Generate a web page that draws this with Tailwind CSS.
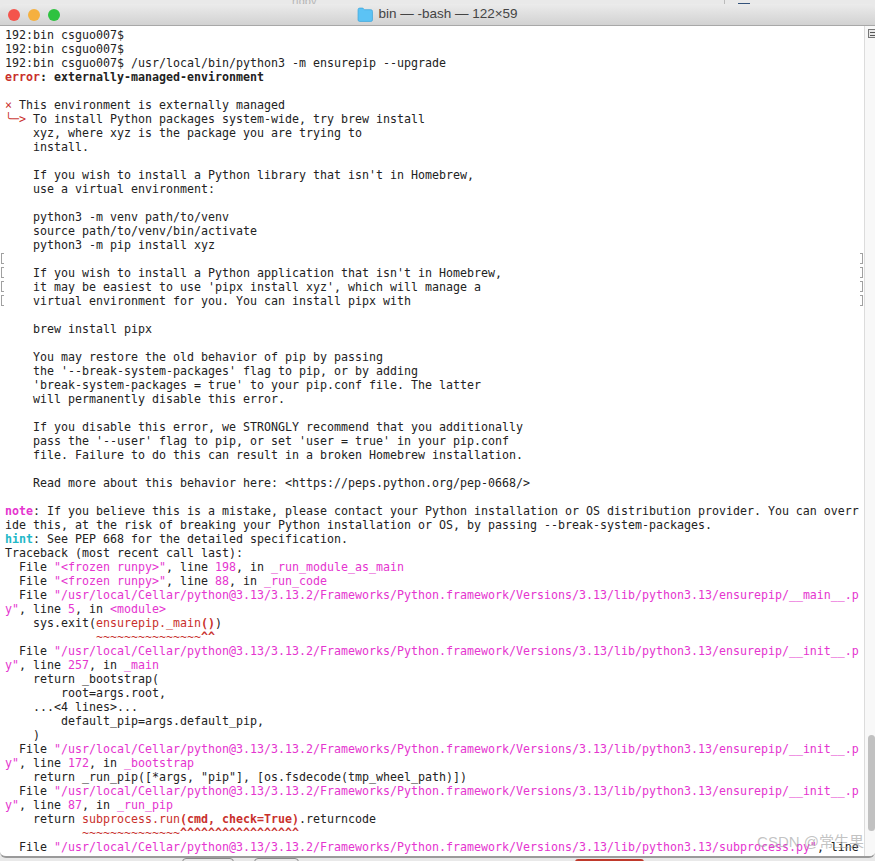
<!DOCTYPE html>
<html lang="en">
<head>
	<meta charset="UTF-8" />
	<title>bin — -bash — 122×59</title>
	<script src="https://cdn.jsdelivr.net/npm/@tailwindcss/browser@4"></script>
</head>
<body class="bg-[#e9e9e9] h-[861px] w-[875px] overflow-hidden">
	<div class="relative h-[861px] pt-[4px] flex flex-col">
		<!-- o que aparece atras da janela -->
		<span class="absolute left-[292px] top-[-7px] text-[11px] text-[#b5b5b5] font-['Liberation_Sans',sans-serif]">rfdby</span>
		<span class="absolute left-[724px] top-0 h-[4px] w-px bg-[#bbbbbb]"></span>
		<span class="absolute left-[738px] top-[3px] h-[1px] w-[12px] bg-[#33527a]"></span>
		<span class="absolute left-[182px] top-[858px] h-[6px] w-[52px] rounded-t-[4px] border border-[#888888]"></span>
		<span class="absolute left-[254px] top-[858px] h-[6px] w-[45px] rounded-t-[4px] border border-[#888888]"></span>
		<span class="absolute left-[575px] top-[859px] h-[4px] w-[69px] rounded-t-[3px] bg-[#c0392b]"></span>

		<!-- barra de titulo -->
		<div class="relative flex items-center justify-center shrink-0 h-[22px] rounded-t-[6px] border-b border-[#a8a8a8] bg-gradient-to-b from-[#ebebeb] to-[#d2d2d2]">
			<div class="absolute left-[8px] top-[5px] flex gap-[8px]">
				<span class="w-[12px] h-[12px] rounded-full bg-[#f4544c]"></span>
				<span class="w-[12px] h-[12px] rounded-full bg-[#f5b03f]"></span>
				<span class="w-[12px] h-[12px] rounded-full bg-[#2fc240]"></span>
			</div>
			<div class="flex items-center gap-[5px] text-[13.5px] text-[#444444] font-['Liberation_Sans',sans-serif]">
				<svg width="16" height="15" viewBox="0 0 15 14"><path d="M1 2.5 Q1 1 2.5 1 H5.5 L7 2.5 H13 Q14.5 2.5 14.5 4 V12 Q14.5 13.5 13 13.5 H2.5 Q1 13.5 1 12 Z" fill="#5cc3f5" stroke="#3ea6dc" stroke-width="0.7"/></svg>
				<span>bin — -bash — 122×59</span>
			</div>
		</div>

		<div class="relative flex h-[832px] shrink-0 rounded-b-[6px] overflow-hidden border-b-2 border-[#9a9a9a] bg-white">
			<!-- terminal -->
			<div class="relative flex-1 flex flex-col pl-[5px] pt-[2px] font-['DejaVu_Sans_Mono',monospace] text-[11.63px] leading-[14px] text-[#222222] whitespace-pre overflow-hidden">
				<div class="h-[14px]">192:bin csguo007$</div>
				<div class="h-[14px]">192:bin csguo007$</div>
				<div class="h-[14px]">192:bin csguo007$ /usr/local/bin/python3 -m ensurepip --upgrade</div>
				<div class="h-[14px] font-bold"><span class="text-[#c9302c]">error</span>: externally-managed-environment</div>
				<div class="h-[14px]"></div>
				<div class="h-[14px]"><span class="text-[#c9302c]">×</span> This environment is externally managed</div>
				<div class="h-[14px]"><span class="text-[#c9302c]">╰─&gt;</span> To install Python packages system-wide, try brew install</div>
				<div class="h-[14px]">    xyz, where xyz is the package you are trying to</div>
				<div class="h-[14px]">    install.</div>
				<div class="h-[14px]"></div>
				<div class="h-[14px]">    If you wish to install a Python library that isn't in Homebrew,</div>
				<div class="h-[14px]">    use a virtual environment:</div>
				<div class="h-[14px]"></div>
				<div class="h-[14px]">    python3 -m venv path/to/venv</div>
				<div class="h-[14px]">    source path/to/venv/bin/activate</div>
				<div class="h-[14px]">    python3 -m pip install xyz</div>
				<div class="h-[14px]"></div>
				<div class="h-[14px]">    If you wish to install a Python application that isn't in Homebrew,</div>
				<div class="h-[14px]">    it may be easiest to use 'pipx install xyz', which will manage a</div>
				<div class="h-[14px]">    virtual environment for you. You can install pipx with</div>
				<div class="h-[14px]"></div>
				<div class="h-[14px]">    brew install pipx</div>
				<div class="h-[14px]"></div>
				<div class="h-[14px]">    You may restore the old behavior of pip by passing</div>
				<div class="h-[14px]">    the '--break-system-packages' flag to pip, or by adding</div>
				<div class="h-[14px]">    'break-system-packages = true' to your pip.conf file. The latter</div>
				<div class="h-[14px]">    will permanently disable this error.</div>
				<div class="h-[14px]"></div>
				<div class="h-[14px]">    If you disable this error, we STRONGLY recommend that you additionally</div>
				<div class="h-[14px]">    pass the '--user' flag to pip, or set 'user = true' in your pip.conf</div>
				<div class="h-[14px]">    file. Failure to do this can result in a broken Homebrew installation.</div>
				<div class="h-[14px]"></div>
				<div class="h-[14px]">    Read more about this behavior here: &lt;https://peps.python.org/pep-0668/&gt;</div>
				<div class="h-[14px]"></div>
				<div class="h-[14px]"><b class="text-[#e535cf]">note</b>: If you believe this is a mistake, please contact your Python installation or OS distribution provider. You can overr</div>
				<div class="h-[14px]">ide this, at the risk of breaking your Python installation or OS, by passing --break-system-packages.</div>
				<div class="h-[14px]"><b class="text-[#22b8c8]">hint</b>: See PEP 668 for the detailed specification.</div>
				<div class="h-[14px]">Traceback (most recent call last):</div>
				<div class="h-[14px]">  File <span class="text-[#e535cf]">"&lt;frozen runpy&gt;"</span>, line <span class="text-[#e535cf]">198</span>, in <span class="text-[#e535cf]">_run_module_as_main</span></div>
				<div class="h-[14px]">  File <span class="text-[#e535cf]">"&lt;frozen runpy&gt;"</span>, line <span class="text-[#e535cf]">88</span>, in <span class="text-[#e535cf]">_run_code</span></div>
				<div class="h-[14px]">  File <span class="text-[#e535cf]">"/usr/local/Cellar/python@3.13/3.13.2/Frameworks/Python.framework/Versions/3.13/lib/python3.13/ensurepip/__main__.p</span></div>
				<div class="h-[14px]"><span class="text-[#e535cf]">y"</span>, line <span class="text-[#e535cf]">5</span>, in <span class="text-[#e535cf]">&lt;module&gt;</span></div>
				<div class="h-[14px]">    sys.exit(<span class="text-[#c9302c]">ensurepip._main<b>()</b></span>)</div>
				<div class="h-[14px] text-[#c9302c]">             ~~~~~~~~~~~~~~~<b>^^</b></div>
				<div class="h-[14px]">  File <span class="text-[#e535cf]">"/usr/local/Cellar/python@3.13/3.13.2/Frameworks/Python.framework/Versions/3.13/lib/python3.13/ensurepip/__init__.p</span></div>
				<div class="h-[14px]"><span class="text-[#e535cf]">y"</span>, line <span class="text-[#e535cf]">257</span>, in <span class="text-[#e535cf]">_main</span></div>
				<div class="h-[14px]">    return _bootstrap(</div>
				<div class="h-[14px]">        root=args.root,</div>
				<div class="h-[14px]">    ...&lt;4 lines&gt;...</div>
				<div class="h-[14px]">        default_pip=args.default_pip,</div>
				<div class="h-[14px]">    )</div>
				<div class="h-[14px]">  File <span class="text-[#e535cf]">"/usr/local/Cellar/python@3.13/3.13.2/Frameworks/Python.framework/Versions/3.13/lib/python3.13/ensurepip/__init__.p</span></div>
				<div class="h-[14px]"><span class="text-[#e535cf]">y"</span>, line <span class="text-[#e535cf]">172</span>, in <span class="text-[#e535cf]">_bootstrap</span></div>
				<div class="h-[14px]">    return _run_pip([*args, "pip"], [os.fsdecode(tmp_wheel_path)])</div>
				<div class="h-[14px]">  File <span class="text-[#e535cf]">"/usr/local/Cellar/python@3.13/3.13.2/Frameworks/Python.framework/Versions/3.13/lib/python3.13/ensurepip/__init__.p</span></div>
				<div class="h-[14px]"><span class="text-[#e535cf]">y"</span>, line <span class="text-[#e535cf]">87</span>, in <span class="text-[#e535cf]">_run_pip</span></div>
				<div class="h-[14px]">    return <span class="text-[#c9302c]">subprocess.run<b>(cmd, check=True)</b></span>.returncode</div>
				<div class="h-[14px] text-[#c9302c]">           ~~~~~~~~~~~~~~<b>^^^^^^^^^^^^^^^^^</b></div>
				<div class="h-[14px]">  File <span class="text-[#e535cf]">"/usr/local/Cellar/python@3.13/3.13.2/Frameworks/Python.framework/Versions/3.13/lib/python3.13/subprocess.py"</span>, line</div>

				<!-- marcas de selecao -->
				<span class="absolute left-[1px] top-[227px] w-[3px] h-[11px] border-l border-y border-[#a0a0a0]"></span>
				<span class="absolute left-[1px] top-[241px] w-[3px] h-[11px] border-l border-y border-[#a0a0a0]"></span>
				<span class="absolute left-[1px] top-[255px] w-[3px] h-[11px] border-l border-y border-[#a0a0a0]"></span>
				<span class="absolute left-[1px] top-[269px] w-[3px] h-[11px] border-l border-y border-[#a0a0a0]"></span>
				<span class="absolute right-[1px] top-[227px] w-[3px] h-[11px] border-r border-y border-[#a0a0a0]"></span>
				<span class="absolute right-[1px] top-[241px] w-[3px] h-[11px] border-r border-y border-[#a0a0a0]"></span>
				<span class="absolute right-[1px] top-[255px] w-[3px] h-[11px] border-r border-y border-[#a0a0a0]"></span>
				<span class="absolute right-[1px] top-[269px] w-[3px] h-[11px] border-r border-y border-[#a0a0a0]"></span>

				<span class="absolute right-[0px] top-[809px] text-[15px] text-[#9a9a9a]/60 font-['Liberation_Sans','Noto_Sans_CJK_SC',sans-serif]">CSDN @常生果</span>
			</div>

			<!-- barra de rolagem -->
			<div class="relative w-[11px] shrink-0 border-l border-[#dcdcdc] bg-[#f8f8f8]">
				<div class="absolute left-[3px] top-[3px] w-[8px] h-[9px] border-y border-l border-[#777777] bg-[#e8e8e8] flex flex-col justify-center gap-[2px] pl-[1px]">
					<span class="h-px bg-[#555555]"></span>
					<span class="h-px bg-[#555555]"></span>
				</div>
				<div class="absolute left-[3px] top-[709px] w-[7px] h-[96px] rounded-full bg-[#c1c1c1]"></div>
			</div>
		</div>
	</div>
</body>
</html>
